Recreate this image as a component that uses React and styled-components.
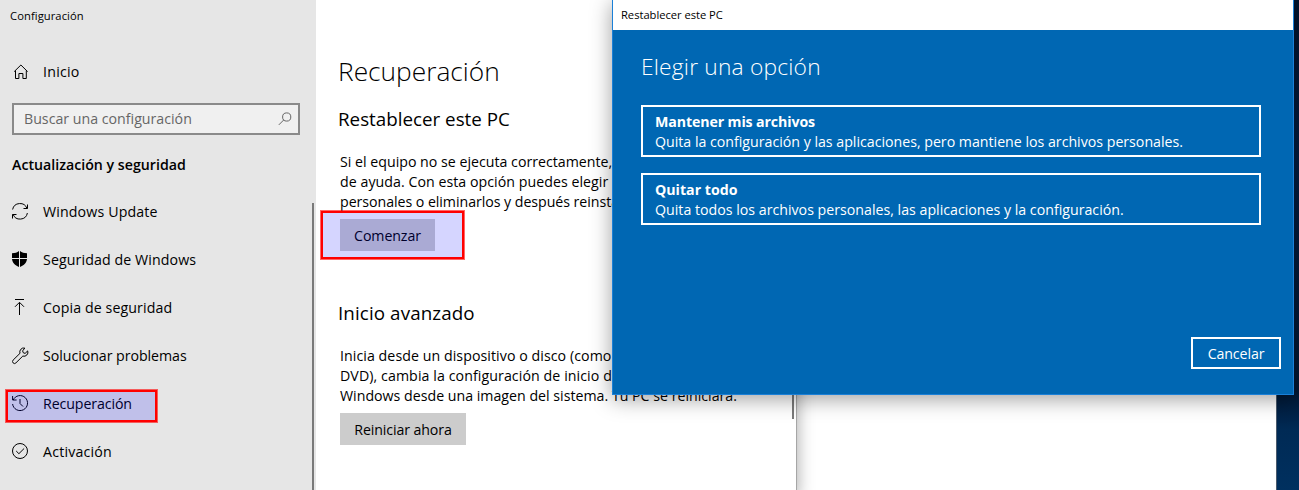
import React from "react";
import styled, { createGlobalStyle } from "styled-components";

const Global = createGlobalStyle`
  * { box-sizing: border-box; }
  body { margin: 0; overflow: hidden; }
  h1, h2, p { margin: 0; font-weight: 400; }
  button { font: inherit; color: inherit; padding: 0; border: 0; }
`;

const Desktop = styled.main`
  position: relative;
  width: 1299px;
  height: 490px;
  overflow: hidden;
  font-family: "Open Sans", "Noto Sans", sans-serif;
  font-size: 14.2px;
  line-height: 20px;
  color: #000;
  background: linear-gradient(180deg, #00142f 0, #001c40 160px, #001733 390px, #002a55 430px, #00305f 490px);
`;

const Label = styled.span`
  display: inline-block;
  white-space: pre;
  letter-spacing: ${(p) => p.$track || 0}px;
`;

const BackWindow = styled.div`
  position: absolute;
  left: 790px;
  top: 0;
  width: 487px;
  height: 490px;
  background: #fff;
  border-right: 1px solid #4b5a6c;
`;

const SettingsWindow = styled.section`
  position: absolute;
  left: 0;
  top: 0;
  display: flex;
  width: 797px;
  height: 490px;
  background: #fff;
  border-right: 1px solid #a6a6a6;
  box-shadow: 0 8px 16px rgba(0, 0, 0, 0.36);
`;

const Sidebar = styled.aside`
  display: flex;
  width: 316px;
  background: #e6e6e6;
`;

const SidebarBody = styled.div`
  flex: 1;
`;

const SidebarScroll = styled.div`
  width: 2px;
  margin: 203px 2px 0 0;
  background: #7a7a7a;
`;

const WindowTitle = styled.div`
  height: 32px;
  padding-left: 10px;
  font-size: 11.2px;
  line-height: 32px;
`;

const NavRow = styled.div`
  display: flex;
  align-items: center;
  gap: 11px;
  height: 48px;
  padding-left: 12px;
  margin-top: ${(p) => p.$top || 0}px;
`;

const Icon = styled.svg`
  display: block;
  flex: none;
  width: ${(p) => p.$size || 20}px;
  height: ${(p) => p.$size || 20}px;
  fill: none;
  stroke: currentColor;
  stroke-width: 1;
`;

const Search = styled.div`
  display: flex;
  align-items: center;
  justify-content: space-between;
  width: 288px;
  height: 32px;
  margin: 7px 0 0 12px;
  padding: 0 6px 0 10px;
  border: 2px solid #8a8a8a;
  background: #f0f0f0;
  color: #666;
`;

const Category = styled.div`
  height: 30px;
  margin: 15px 0 8px 12px;
  line-height: 30px;
  font-weight: 600;
`;

const Content = styled.div`
  flex: 1;
  padding: 49px 0 0 22px;
`;

const PageTitle = styled.h1`
  height: 44px;
  font-size: 26.3px;
  line-height: 44px;
  font-weight: 300;
`;

const SectionTitle = styled.h2`
  height: 28px;
  margin-top: ${(p) => p.$top}px;
  font-size: 18.8px;
  line-height: 28px;
`;

const Copy = styled.p`
  display: flex;
  flex-direction: column;
  align-items: flex-start;
  margin: 19px 0 7px 2px;
`;

const GreyButton = styled.button`
  display: block;
  width: ${(p) => p.$w}px;
  height: 32px;
  margin-left: 2px;
  padding-top: 2px;
  background: #ccc;
  line-height: 30px;
  text-align: center;
`;

const ContentScroll = styled.div`
  width: 2px;
  height: 419px;
  margin-right: 2px;
  background: #7a7a7a;
`;

const Dialog = styled.section`
  position: absolute;
  left: 612px;
  top: -1px;
  width: 682px;
  height: 396px;
  display: flex;
  flex-direction: column;
  border: 1px solid #1a80d8;
  background: #0067b3;
  color: #fff;
  box-shadow: 0 4px 20px rgba(0, 0, 0, 0.38);
`;

const DialogBar = styled.div`
  height: 30px;
  padding-left: 8px;
  background: #fff;
  color: #000;
  font-size: 11.2px;
  line-height: 30px;
`;

const DialogBody = styled.div`
  flex: 1;
  display: flex;
  flex-direction: column;
  padding: 17px 32px 25px 28px;
`;

const DialogTitle = styled.h2`
  height: 40px;
  margin-bottom: 18px;
  font-size: 22.8px;
  line-height: 40px;
  font-weight: 300;
`;

const Option = styled.button`
  display: flex;
  flex-direction: column;
  align-items: flex-start;
  height: 52px;
  margin-bottom: 16px;
  padding: 5px 12px;
  border: 2px solid #fff;
  background: transparent;
  line-height: 20px;
`;

const Strong = styled.strong`
  font-weight: 700;
`;

const Cancel = styled.button`
  align-self: flex-end;
  width: 90px;
  height: 32px;
  margin: auto -20px 0 0;
  padding-top: 2px;
  border: 2px solid #fff;
  background: transparent;
`;

const Highlight = styled.div`
  position: absolute;
  left: ${(p) => p.$x}px;
  top: ${(p) => p.$y}px;
  width: ${(p) => p.$w}px;
  height: ${(p) => p.$h}px;
  border: 2px solid #f00;
  background: rgba(0, 0, 255, 0.165);
  background-clip: padding-box;
  box-shadow: 0 0 0 1px rgba(255, 0, 0, 0.6);
`;

const HomeIcon = () => (
  <Icon viewBox="0 0 20 20"><path d="M2.2 9.6 8.9 3l6.7 6.6M3.5 8.6v7.9h3.4v-5h4v5h3.4V8.6" /></Icon>
);
const SearchIcon = () => (
  <Icon $size={14} viewBox="0 0 14 14"><circle cx="8.7" cy="5" r="4.1" /><path d="M5.8 7.9.8 12.9" /></Icon>
);
const UpdateIcon = () => (
  <Icon viewBox="0 0 20 20"><path d="M.6 7.500A7.500 7.500 0 0 1 15 6.500M15.500 2.500v4h-4M15.400 11A7.500 7.500 0 0 1 1 12.200M.5 16.500v-4h4" /></Icon>
);
const ShieldIcon = () => (
  <Icon viewBox="0 0 20 20"><path fill="currentColor" stroke="none" d="M0 3.3C3 3.2 5.2 2.4 7 1v7H0zM8 1c1.9 1.4 4 2.2 7 2.3V8H8zM0 9h7v8C3 15.5.3 12.5 0 9zM8 9h7c-.3 3.5-2.9 6.5-7 8z" /></Icon>
);
const BackupIcon = () => (
  <Icon viewBox="0 0 20 20"><path d="M3 1.5h9M7.5 17V4.500M3 8.800l4.500-4.500L12 8.800" /></Icon>
);
const WrenchIcon = () => (
  <Icon viewBox="0 0 20 20"><path d="M12.800 2.100a4 4 0 0 0-4.800 5.200L1.100 14.100a1.950 1.950 0 0 0 2.800 2.800l6.900-6.800a4 4 0 0 0 4.900-5.200l-2.600 2.500-1.800-.6-.7-1.900z" /></Icon>
);
const HistoryIcon = () => (
  <Icon viewBox="0 0 20 20"><path d="M1.200 6A7.500 7.500 0 1 1 .6 10M.6 2v4h4M8 5v4.500l3 3" /></Icon>
);
const CheckIcon = () => (
  <Icon viewBox="0 0 20 20"><circle cx="8" cy="9" r="7.500" /><path d="m4.200 9 2.700 2.700L12.100 6.500" /></Icon>
);

const NAV = [
  ["Windows Update", UpdateIcon, 0.14],
  ["Seguridad de Windows", ShieldIcon, 0.1],
  ["Copia de seguridad", BackupIcon, 0.1],
  ["Solucionar problemas", WrenchIcon, -0.05],
  ["Recuperación", HistoryIcon, -0.1],
  ["Activación", CheckIcon, 0.2],
];

export default function App() {
  return (
    <Desktop>
      <Global />
      <BackWindow />
      <SettingsWindow>
        <Sidebar>
          <SidebarBody>
            <WindowTitle><Label $track={0.08}>Configuración</Label></WindowTitle>
            <NavRow $top={16}><HomeIcon /><Label $track={0.25}>Inicio</Label></NavRow>
            <Search><Label>Buscar una configuración</Label><SearchIcon /></Search>
            <Category><Label>Actualización y seguridad</Label></Category>
            {NAV.map(([text, Glyph, track]) => (
              <NavRow key={text}><Glyph /><Label $track={track}>{text}</Label></NavRow>
            ))}
          </SidebarBody>
          <SidebarScroll />
        </Sidebar>
        <Content>
          <PageTitle><Label>Recuperación</Label></PageTitle>
          <SectionTitle $top={12}><Label>Restablecer este PC</Label></SectionTitle>
          <Copy>
            <Label>Si el equipo no se ejecuta correctamente,</Label>
            <Label $track={0.04}>de ayuda. Con esta opción puedes elegir</Label>
            <Label $track={-0.05}>personales o eliminarlos y después reinstalar</Label>
          </Copy>
          <GreyButton $w={95}><Label $track={-0.1}>Comenzar</Label></GreyButton>
          <SectionTitle $top={48}><Label $track={0.1}>Inicio avanzado</Label></SectionTitle>
          <Copy>
            <Label $track={0.06}>Inicia desde un dispositivo o disco (como</Label>
            <Label $track={0.08}>DVD), cambia la configuración de inicio de</Label>
            <Label>Windows desde una imagen del sistema. Tu PC se reiniciará.</Label>
          </Copy>
          <GreyButton $w={126}><Label $track={-0.12}>Reiniciar ahora</Label></GreyButton>
        </Content>
        <ContentScroll />
      </SettingsWindow>
      <Dialog>
        <DialogBar><Label $track={-0.03}>Restablecer este PC</Label></DialogBar>
        <DialogBody>
          <DialogTitle><Label $track={0.18}>Elegir una opción</Label></DialogTitle>
          <Option>
            <Strong><Label $track={-0.12}>Mantener mis archivos</Label></Strong>
            <Label $track={-0.01}>Quita la configuración y las aplicaciones, pero mantiene los archivos personales.</Label>
          </Option>
          <Option>
            <Strong><Label>Quitar todo</Label></Strong>
            <Label>Quita todos los archivos personales, las aplicaciones y la configuración.</Label>
          </Option>
          <Cancel><Label $track={-0.1}>Cancelar</Label></Cancel>
        </DialogBody>
      </Dialog>
      <Highlight $x={6} $y={390} $w={151} $h={32} />
      <Highlight $x={321} $y={211} $w={143} $h={48} />
    </Desktop>
  );
}
